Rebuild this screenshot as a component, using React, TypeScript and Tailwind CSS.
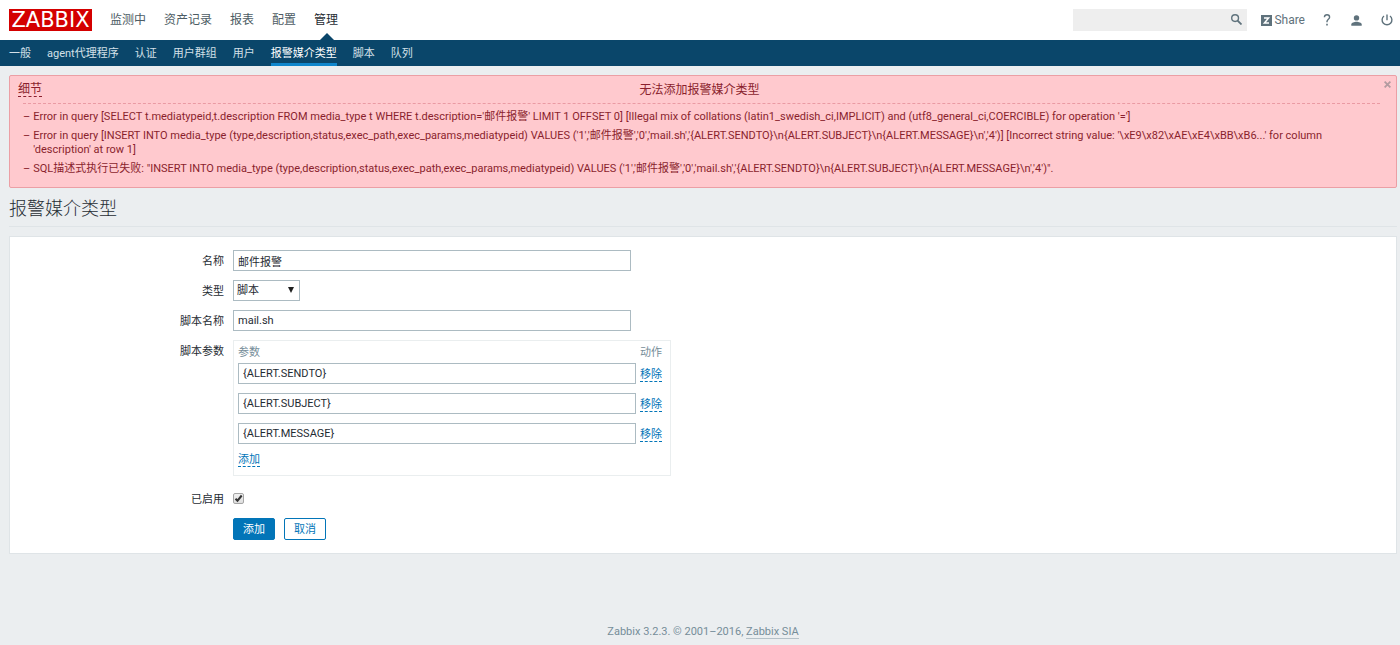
import { useState } from 'react';

const mainMenu = ['监测中', '资产记录', '报表', '配置', '管理'];
const subMenu = ['一般', 'agent代理程序', '认证', '用户群组', '用户', '报警媒介类型', '脚本', '队列'];

const errors = [
  "Error in query [SELECT t.mediatypeid,t.description FROM media_type t WHERE t.description='邮件报警' LIMIT 1 OFFSET 0] [Illegal mix of collations (latin1_swedish_ci,IMPLICIT) and (utf8_general_ci,COERCIBLE) for operation '=']",
  "Error in query [INSERT INTO media_type (type,description,status,exec_path,exec_params,mediatypeid) VALUES ('1','邮件报警','0','mail.sh','{ALERT.SENDTO}\\n{ALERT.SUBJECT}\\n{ALERT.MESSAGE}\\n','4')] [Incorrect string value: '\\xE9\\x82\\xAE\\xE4\\xBB\\xB6...' for column 'description' at row 1]",
  "SQL描述式执行已失败: \"INSERT INTO media_type (type,description,status,exec_path,exec_params,mediatypeid) VALUES ('1','邮件报警','0','mail.sh','{ALERT.SENDTO}\\n{ALERT.SUBJECT}\\n{ALERT.MESSAGE}\\n','4')\".",
];

const inputClass =
  'block h-[21px] w-[398px] border border-[#acbbc2] bg-white px-1 text-[11px] text-[#1f2c33] outline-none focus:border-[#0275b8]';
const linkClass =
  'inline-block border-b border-dashed border-[#0275b8] pt-px leading-[12px] text-[#0275b8]';
const labelClass = 'w-[215px] shrink-0 pt-px pr-px text-right leading-[21px]';

function Header() {
  return (
    <header>
      <div className="flex h-10 items-center bg-white pl-[9px] pr-[7px]">
        <a
          href="#"
          className="flex h-[22px] w-[83px] items-center justify-center bg-[#d40000] font-['DejaVu_Sans'] text-[21px] leading-[22px] text-white"
        >
          ZABBIX
        </a>
        <nav className="ml-[18px] flex h-10 gap-[18px] text-[12px]">
          {mainMenu.map((item) => (
            <a
              key={item}
              href="#"
              className={
                item === '管理'
                  ? 'relative flex items-center text-[#1f2c33]'
                  : 'flex items-center text-[#4d5c64]'
              }
            >
              {item}
              {item === '管理' && (
                <svg className="absolute bottom-0 left-1/2 -ml-[6px]" width="14" height="7" viewBox="0 0 14 7">
                  <path d="M0 7L7 0l7 7z" fill="#0a466a" />
                </svg>
              )}
            </a>
          ))}
        </nav>

        <div className="ml-auto flex items-center text-[#5f727c]">
          <form className="relative mr-[14px]" onSubmit={(e) => e.preventDefault()}>
            <input
              type="text"
              aria-label="搜索"
              className="block h-[22px] w-[174px] bg-[#eeeeee] pl-1 pr-6 text-[11px] outline-none"
            />
            <button type="submit" aria-label="搜索" className="absolute right-[5px] top-[5px]">
              <svg width="11" height="11" viewBox="0 0 11 11" fill="none" stroke="currentColor">
                <circle cx="4.1" cy="4.1" r="3.4" strokeWidth="1.4" />
                <path d="M6.6 6.6L10.5 10.5" strokeWidth="1.8" />
              </svg>
            </button>
          </form>
          <a href="#" className="mr-[18px] flex items-center gap-[2px] text-[12px]">
            <svg width="11" height="11" viewBox="0 0 11 11">
              <rect width="11" height="11" fill="#5f727c" />
              <path d="M3 2.9h4.6L3.4 8.1h4.6" fill="none" stroke="#fff" strokeWidth="1.5" />
            </svg>
            Share
          </a>
          <a href="#" aria-label="帮助" className="mr-[20px]">
            <svg width="8" height="12" viewBox="0 0 8 12" fill="none" stroke="currentColor" strokeWidth="1.4">
              <path d="M1.4 3.3C1.5 1.6 2.5.8 4 .8s2.6.9 2.6 2.4C6.6 5.2 4 5.4 4 7.6V8.2" />
              <path d="M4 9.8V11.4" strokeWidth="1.6" />
            </svg>
          </a>
          <a href="#" aria-label="用户" className="mr-[19px]">
            <svg width="11" height="11" viewBox="0 0 11 11" fill="currentColor">
              <circle cx="5.5" cy="2.9" r="2.7" />
              <path d="M.3 10.7V9.4C.3 7.6 3.5 6.7 5.5 6.7s5.2.9 5.2 2.7v1.3z" />
            </svg>
          </a>
          <a href="#" aria-label="退出">
            <svg width="12" height="12" viewBox="0 0 12 12" fill="none" stroke="currentColor" strokeWidth="1.4">
              <path d="M6 .5V6.2M3 2a4.9 4.9 0 1 0 6 0" />
            </svg>
          </a>
        </div>
      </div>

      <nav className="flex h-[26px] gap-4 bg-[#0a466a] px-[9px] leading-6">
        {subMenu.map((item) => (
          <a
            key={item}
            href="#"
            className={
              item === '报警媒介类型'
                ? 'border-b-[3px] border-[#0f86cc] pt-[2px] text-white'
                : 'pt-[2px] text-[#d3e0e8]'
            }
          >
            {item}
          </a>
        ))}
      </nav>
    </header>
  );
}

function ErrorMessage() {
  return (
    <section className="relative mt-[9px] rounded-[2px] border border-[#eb9fa5] bg-[#ffc9ce] px-4 pb-[11px] pl-[13px] text-[#8a1f2d]">
      <div className="flex h-[27px] items-center text-[12px]">
        <button type="button" className="-ml-[5px] border-b border-dashed border-[#8a1f2d] leading-[14px]">
          细节
        </button>
        <h2 className="flex-1 pr-[23px] text-center">无法添加报警媒介类型</h2>
      </div>
      <ul className="flex flex-col gap-[5px] border-t border-dashed border-[#ea9aa3] pt-[6px] leading-[14px]">
        {errors.map((error) => (
          <li key={error} className="flex gap-[3px]">
            <span>–</span>
            <span>{error}</span>
          </li>
        ))}
      </ul>
      <button type="button" aria-label="关闭" className="absolute right-[5px] top-[5px] text-[#b39ba0]">
        <svg width="7" height="7" viewBox="0 0 7 7" stroke="currentColor" strokeWidth="1.8">
          <path d="M.6.6l5.8 5.8M6.4.6L.6 6.4" />
        </svg>
      </button>
    </section>
  );
}

function MediaTypeForm() {
  const [params, setParams] = useState(['{ALERT.SENDTO}', '{ALERT.SUBJECT}', '{ALERT.MESSAGE}']);

  return (
    <form
      className="mt-[9px] flex flex-col gap-2 border border-[#dfe4e7] bg-white py-[13px]"
      onSubmit={(e) => e.preventDefault()}
    >
      <div className="flex gap-2">
        <label htmlFor="description" className={labelClass}>名称</label>
        <input id="description" type="text" defaultValue="邮件报警" className={inputClass} />
      </div>

      <div className="flex gap-2">
        <label htmlFor="type" className={labelClass}>类型</label>
        <div className="relative">
          <select
            id="type"
            defaultValue="script"
            className="block h-[21px] w-[67px] appearance-none border border-[#acbbc2] bg-white px-[3px] pt-[2px] text-[11px] text-[#1f2c33] outline-none"
          >
            <option value="script">脚本</option>
          </select>
          <svg className="pointer-events-none absolute right-[6px] top-[7px]" width="6" height="6" viewBox="0 0 6 6">
            <path d="M0 0h6L3 6z" fill="#1f1f1f" />
          </svg>
        </div>
      </div>

      <div className="flex gap-2">
        <label htmlFor="exec-path" className={labelClass}>脚本名称</label>
        <input id="exec-path" type="text" defaultValue="mail.sh" className={inputClass} />
      </div>

      <div className="flex gap-2">
        <span className={labelClass}>脚本参数</span>
        <div className="border border-[#eaeeef] px-1 pb-[6px] pt-1">
          <table>
            <thead>
              <tr className="h-[15px] text-left leading-[15px] text-[#768d99]">
                <th className="p-0 font-normal">参数</th>
                <th className="px-1 py-0 font-normal">动作</th>
              </tr>
            </thead>
            <tbody>
              {params.map((param, i) => (
                <tr key={param}>
                  <td className="px-0 pb-[6px] pt-[3px]">
                    <input type="text" aria-label={`参数 ${i + 1}`} defaultValue={param} className={inputClass} />
                  </td>
                  <td className="px-1">
                    <button
                      type="button"
                      className={linkClass}
                      onClick={() => setParams(params.filter((p) => p !== param))}
                    >
                      移除
                    </button>
                  </td>
                </tr>
              ))}
            </tbody>
          </table>
          <button type="button" className={`${linkClass} mt-[3px]`}>添加</button>
        </div>
      </div>

      <div className="mt-1 flex items-center gap-2">
        <label htmlFor="status" className={labelClass}>已启用</label>
        <div className="relative">
          <input
            id="status"
            type="checkbox"
            defaultChecked
            className="peer block size-[11px] appearance-none rounded-[2px] border border-[#a5a5a5] bg-linear-to-b from-[#f0f0f0] to-[#dedede]"
          />
          <svg
            className="pointer-events-none invisible absolute left-0 top-0 peer-checked:visible"
            width="11"
            height="11"
            viewBox="0 0 11 11"
            fill="none"
            stroke="#333"
            strokeWidth="2"
          >
            <path d="M2.5 5.7l2 2L8.7 2.5" />
          </svg>
        </div>
      </div>

      <div className="ml-[223px] flex gap-[9px]">
        <button type="submit" className="h-[22px] w-[42px] rounded-[2px] border border-[#0275b8] bg-[#0275b8] pt-[3px] text-white">
          添加
        </button>
        <button type="button" className="h-[22px] w-[42px] rounded-[2px] border border-[#0275b8] bg-white pt-[3px] text-[#0275b8]">
          取消
        </button>
      </div>
    </form>
  );
}

export default function App() {
  return (
    <div className="flex min-h-screen flex-col bg-[#ebeef0] font-['Roboto','Noto_Sans_CJK_SC',sans-serif] text-[11px] text-[#1f2c33]">
      <Header />
      <main className="pl-[9px] pr-[3px]">
        <ErrorMessage />
        <h1 className="border-b border-[#dfe4e7] pb-1 pt-[7px] text-[18px] font-light leading-[27px]">报警媒介类型</h1>
        <MediaTypeForm />
      </main>
      <footer className="mt-auto pb-[6px] pl-[6px] pt-6 text-center leading-[13px] text-[#768d99]">
        Zabbix 3.2.3. © 2001–2016,{' '}
        <a href="#" className="inline-block border-b border-[#b5c1c8]">Zabbix SIA</a>
      </footer>
    </div>
  );
}
